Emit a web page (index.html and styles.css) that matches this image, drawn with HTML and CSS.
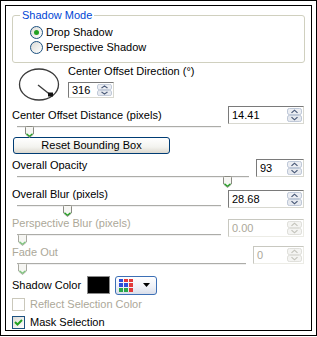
FILE: index.html
```html
<!DOCTYPE html>
<html>
<head>
<meta charset="utf-8">
<link rel="stylesheet" href="styles.css">
</head>
<body>
<svg class="defs" width="0" height="0">
  <defs>
    <symbol id="spinner" viewBox="0 0 15 16" preserveAspectRatio="none">
      <rect x="0.5" y="0.5" width="14" height="7" rx="2" fill="#eceef3" stroke="#b8c2d3"/>
      <rect x="0.5" y="8.5" width="14" height="7" rx="2" fill="#e6e9ef" stroke="#b8c2d3"/>
      <polyline points="4.5,5.5 7.5,2.5 10.5,5.5" fill="none" stroke="#4a5a78" stroke-width="1.3"/>
      <polyline points="4.5,10.5 7.5,13.5 10.5,10.5" fill="none" stroke="#4a5a78" stroke-width="1.3"/>
    </symbol>
    <symbol id="spinner-off" viewBox="0 0 15 16" preserveAspectRatio="none">
      <rect x="0.5" y="0.5" width="14" height="7" rx="2" fill="#f4f4f2" stroke="#dcdcd6"/>
      <rect x="0.5" y="8.5" width="14" height="7" rx="2" fill="#f4f4f2" stroke="#dcdcd6"/>
      <polyline points="4.5,5.5 7.5,2.5 10.5,5.5" fill="none" stroke="#c4c4bc" stroke-width="1.3"/>
      <polyline points="4.5,10.5 7.5,13.5 10.5,10.5" fill="none" stroke="#c4c4bc" stroke-width="1.3"/>
    </symbol>
    <symbol id="thumb" viewBox="0 0 9 12">
      <path d="M1.5 0.5 H7.5 Q8.5 0.5 8.5 1.5 V8 L4.5 11.5 L0.5 8 V1.5 Q0.5 0.5 1.5 0.5 Z" fill="#f6f6f3" stroke="#8a8a82"/>
      <path d="M1.5 7.8 L4.5 10.3 L7.5 7.8" fill="none" stroke="#21a121" stroke-width="1.2"/>
    </symbol>
    <symbol id="thumb-off" viewBox="0 0 9 12">
      <path d="M1.5 0.5 H7.5 Q8.5 0.5 8.5 1.5 V8 L4.5 11.5 L0.5 8 V1.5 Q0.5 0.5 1.5 0.5 Z" fill="#f6f6f3" stroke="#a8a8a0"/>
      <path d="M1.5 7.8 L4.5 10.3 L7.5 7.8" fill="none" stroke="#7cc67c" stroke-width="1.2"/>
    </symbol>
  </defs>
</svg>
<div class="frame">
  <div class="panel">
    <fieldset class="group">
      <legend>Shadow Mode</legend>
      <div class="opt"><span class="radio on"></span>Drop Shadow</div>
      <div class="opt"><span class="radio"></span>Perspective Shadow</div>
    </fieldset>

    <div class="dir">
      <svg class="dial" width="42" height="34" viewBox="0 0 42 34">
        <ellipse cx="21" cy="16.5" rx="19.5" ry="15.5" fill="none" stroke="#3a3a3a" stroke-width="1.3"/>
        <line x1="20" y1="17" x2="32" y2="26.5" stroke="#3a3a3a" stroke-width="1.3"/>
        <rect x="30" y="24.5" width="5" height="4" fill="#111"/>
      </svg>
      <div class="dir-col">
        <div class="lbl">Center Offset Direction (°)</div>
        <div class="spin w46 h16"><span class="val">316</span><svg class="arrows"><use href="#spinner"/></svg></div>
      </div>
    </div>

    <div class="param p-dist">
      <div class="pcol">
        <div class="lbl">Center Offset Distance (pixels)</div>
        <div class="slider"><div class="track"></div><svg class="thumb" style="left:8px"><use href="#thumb"/></svg></div>
      </div>
      <div class="spin w76"><span class="val">14.41</span><svg class="arrows"><use href="#spinner"/></svg></div>
    </div>

    <button class="btn">Reset Bounding Box</button>

    <div class="param p-opa">
      <div class="pcol">
        <div class="lbl">Overall Opacity</div>
        <div class="slider"><div class="track"></div><svg class="thumb" style="left:206px"><use href="#thumb"/></svg></div>
      </div>
      <div class="spin w48"><span class="val">93</span><svg class="arrows"><use href="#spinner"/></svg></div>
    </div>

    <div class="param p-blur">
      <div class="pcol">
        <div class="lbl">Overall Blur (pixels)</div>
        <div class="slider"><div class="track"></div><svg class="thumb" style="left:46px"><use href="#thumb"/></svg></div>
      </div>
      <div class="spin w76"><span class="val">28.68</span><svg class="arrows"><use href="#spinner"/></svg></div>
    </div>

    <div class="param p-pblur dis">
      <div class="pcol">
        <div class="lbl">Perspective Blur (pixels)</div>
        <div class="slider"><div class="track"></div><svg class="thumb" style="left:1px"><use href="#thumb-off"/></svg></div>
      </div>
      <div class="spin w76 off"><span class="val">0.00</span><svg class="arrows"><use href="#spinner-off"/></svg></div>
    </div>

    <div class="param p-fade dis">
      <div class="pcol">
        <div class="lbl">Fade Out</div>
        <div class="slider"><div class="track"></div><svg class="thumb" style="left:1px"><use href="#thumb-off"/></svg></div>
      </div>
      <div class="spin w51 off"><span class="val">0</span><svg class="arrows"><use href="#spinner-off"/></svg></div>
    </div>

    <div class="colorrow">
      <span>Shadow Color</span>
      <span class="swatch"></span>
      <span class="pal">
        <svg class="grid" width="18" height="13" viewBox="0 0 18 13">
          <rect x="0" y="0" width="4" height="3" fill="#2f4fd8"/>
          <rect x="5" y="0" width="4" height="3" fill="#e23a3a"/>
          <rect x="10" y="0" width="4" height="3" fill="#e23a3a"/>
          <rect x="0" y="4" width="4" height="4" fill="#2f4fd8"/>
          <rect x="5" y="4" width="4" height="4" fill="#2f4fd8"/>
          <rect x="10" y="4" width="4" height="4" fill="#e23a3a"/>
          <rect x="0" y="9" width="4" height="4" fill="#2aa84a"/>
          <rect x="5" y="9" width="4" height="4" fill="#2aa84a"/>
          <rect x="10" y="9" width="4" height="4" fill="#e23a3a"/>
        </svg>
        <svg class="caret" width="7" height="4" viewBox="0 0 7 4"><path d="M0 0 H7 L3.5 4 Z" fill="#000"/></svg>
      </span>
    </div>

    <div class="chk dis"><span class="box"></span>Reflect Selection Color</div>
    <div class="chk"><span class="box">
      <svg width="11" height="11" viewBox="0 0 11 11"><path d="M2 5 L4.5 7.5 L9 3" fill="none" stroke="#21a121" stroke-width="2"/></svg>
    </span>Mask Selection</div>
  </div>
</div>
</body>
</html>
```

FILE: styles.css
```css
* { box-sizing: border-box; }
html, body { margin: 0; background: #fff; }
body {
  font: 11px/13px "Liberation Sans", Arial, sans-serif;
  color: #000;
}
.defs { position: absolute; width: 0; height: 0; overflow: hidden; }

.frame {
  width: 317px;
  height: 336px;
  border: 1px solid #000;
  padding: 4px;
}
.panel {
  height: 100%;
  border: 1px solid #000;
  overflow: hidden;
  background: #fff;
}

/* group box */
.group {
  margin: 3px 6px 0;
  padding: 3px 0 7px;
  border: 1px solid #d0d0bf;
  border-radius: 3px;
  min-width: 0;
}
.group legend {
  margin-left: 7px;
  padding: 0 2px;
  color: #0046d5;
}
.opt {
  display: flex;
  align-items: center;
  height: 15px;
  padding-left: 17px;
}
.radio {
  position: relative;
  flex: none;
  width: 13px;
  height: 13px;
  margin-right: 3px;
  border: 1px solid #1c5180;
  border-radius: 50%;
  background: linear-gradient(135deg, #dcdcd7, #fff);
}
.radio.on::after {
  content: "";
  position: absolute;
  left: 3px;
  top: 3px;
  width: 5px;
  height: 5px;
  border-radius: 50%;
  background: #21a121;
}

/* direction */
.dir {
  display: flex;
  margin-top: 2px;
  padding-left: 12px;
}
.dial { flex: none; margin-top: 3px; }
.dir-col { margin-left: 8px; }
.dir-col .spin { margin-top: 4px; }

/* spin boxes */
.spin {
  display: flex;
  align-items: center;
  flex: none;
  height: 18px;
  padding: 1px 1px 1px 3px;
  border: 1px solid;
  border-color: #7a7a7a #d8d8d0 #d8d8d0 #7a7a7a;
  background: #fff;
}
.spin.h16 { height: 16px; }
.spin .val { flex: 1; line-height: 14px; }
.spin .arrows { width: 15px; height: 100%; flex: none; }
.spin.off { color: #aca899; border-color: #c8c8c0 #ececE6 #ececE6 #c8c8c0; }
.w46 { width: 46px; }
.w48 { width: 48px; }
.w51 { width: 51px; }
.w76 { width: 76px; }

/* parameter rows */
.param {
  display: flex;
  height: 27px;
  margin-top: 2px;
  padding: 0 7px 0 6px;
}
.param.dis .lbl { color: #aca899; }
.pcol { flex: 1; min-width: 0; }
.param .spin { margin-left: 7px; }
.slider {
  position: relative;
  height: 14px;
  margin-left: 5px;
}
.track {
  margin-top: 4px;
  height: 2px;
  border-top: 1px solid #acaca8;
  border-bottom: 1px solid #f0f0f0;
}
.thumb {
  position: absolute;
  top: 0;
  width: 9px;
  height: 12px;
}
.p-dist { margin-top: 7px; }
.p-dist .spin { margin-top: -3px; }
.p-opa { margin-top: 5px; }
.p-blur .spin { margin-top: 2px; }
.p-pblur .spin { margin-top: 2px; }

/* button */
.btn {
  display: block;
  width: 157px;
  height: 17px;
  margin: 1px 0 0 7px;
  padding: 0;
  border: 1px solid #003c74;
  border-radius: 3px;
  background: linear-gradient(#fff, #f3f3ef 60%, #dcd8cf);
  font: inherit;
  color: #000;
}

/* shadow color */
.colorrow {
  display: flex;
  align-items: center;
  height: 20px;
  margin-top: 2px;
  padding-left: 6px;
}
.swatch {
  width: 23px;
  height: 18px;
  margin-left: 6px;
  border: 1px solid #8a8a8a;
  background: #000;
}
.pal {
  display: flex;
  align-items: center;
  width: 42px;
  height: 19px;
  margin-left: 5px;
  padding-left: 3px;
  border: 1px solid #3c6fb5;
  border-radius: 3px;
  background: linear-gradient(#fff, #eef0f6 60%, #d9deea);
}
.grid { flex: none; }
.caret { flex: none; margin-left: 6px; }

/* checkboxes */
.chk {
  display: flex;
  align-items: center;
  height: 18px;
  padding-left: 6px;
}
.box {
  display: flex;
  align-items: center;
  justify-content: center;
  flex: none;
  width: 13px;
  height: 13px;
  margin-right: 5px;
  border: 1px solid #1c5180;
  background: linear-gradient(135deg, #dcdcd7, #fff);
}
.chk.dis { color: #aca899; }
.chk.dis .box { border-color: #cac8bb; background: #fff; }
```
